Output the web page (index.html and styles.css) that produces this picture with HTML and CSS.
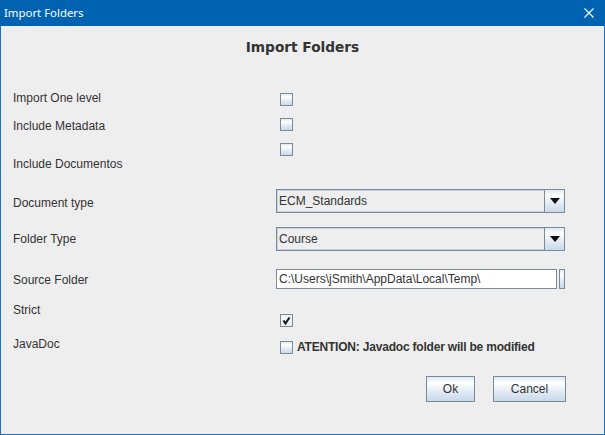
FILE: index.html
```html
<!DOCTYPE html>
<html>
<head>
<meta charset="utf-8">
<link rel="stylesheet" href="styles.css">
</head>
<body>
<div class="window">
  <div class="titlebar">
    <span class="title">Import Folders</span>
    <svg class="close" width="10" height="10" viewBox="0 0 10 10"><path d="M0.5 0.5L9.5 9.5M9.5 0.5L0.5 9.5" stroke="#ffffff" stroke-width="1.1" fill="none"/></svg>
  </div>
  <div class="body">
    <div class="heading">Import Folders</div>
    <div class="form">
      <div class="row r1"><span class="lbl">Import One level</span><div class="ctl"><span class="check"></span></div></div>
      <div class="row r2"><span class="lbl">Include Metadata</span><div class="ctl"><span class="check"></span></div></div>
      <div class="row r3"><span class="lbl">Include Documentos</span><div class="ctl"><span class="check"></span></div></div>
      <div class="row r4"><span class="lbl">Document type</span>
        <div class="ctl"><div class="combo"><span class="combo-value">ECM_Standards</span><span class="combo-btn"><svg width="10" height="6" viewBox="0 0 10 6"><path d="M0 0H10L5 6Z" fill="#111"/></svg></span></div></div>
      </div>
      <div class="row r5"><span class="lbl">Folder Type</span>
        <div class="ctl"><div class="combo"><span class="combo-value">Course</span><span class="combo-btn"><svg width="10" height="6" viewBox="0 0 10 6"><path d="M0 0H10L5 6Z" fill="#111"/></svg></span></div></div>
      </div>
      <div class="row r6"><span class="lbl">Source Folder</span>
        <div class="ctl"><div class="field"><span class="field-input">C:\Users\jSmith\AppData\Local\Temp\</span><span class="field-btn"></span></div></div>
      </div>
      <div class="row r7"><span class="lbl">Strict</span>
        <div class="ctl"><span class="check checked"><svg width="11" height="11" viewBox="0 0 11 11"><path d="M2.5 5.5L4.5 8.5L8.5 2.5" stroke="#111" stroke-width="2" fill="none"/></svg></span></div>
      </div>
      <div class="row r8"><span class="lbl">JavaDoc</span>
        <div class="ctl"><div class="notice"><span class="check"></span><span class="notice-text">ATENTION: Javadoc folder will be modified</span></div></div>
      </div>
    </div>
    <div class="actions">
      <button class="btn btn-ok">Ok</button>
      <button class="btn btn-cancel">Cancel</button>
    </div>
  </div>
</div>
</body>
</html>
```

FILE: styles.css
```css
html, body {
  margin: 0;
  padding: 0;
  background: #eeeeee;
}

.window {
  width: 605px;
  height: 435px;
  display: flex;
  flex-direction: column;
}

.titlebar {
  height: 26px;
  flex: none;
  background: #0063b1;
  color: #ffffff;
  display: flex;
  align-items: center;
  justify-content: space-between;
  padding: 0 11px 0 4px;
  box-sizing: border-box;
}

.title {
  font-family: "Noto Sans", "Open Sans", sans-serif;
  font-size: 11.4px;
  line-height: 14px;
}

.close {
  display: block;
}

.body {
  flex: 1;
  border: 1px solid #1a73c4;
  border-top: 0;
  background: #eeeeee;
  color: #333333;
  font-family: "Liberation Sans", Arial, sans-serif;
  font-size: 12px;
  line-height: 14px;
}

.heading {
  margin-top: 13px;
  text-align: center;
  font-family: "DejaVu Sans", sans-serif;
  font-weight: bold;
  font-size: 13.7px;
  line-height: 16px;
  color: #333333;
}

.form {
  margin-top: 33px;
  padding-left: 12px;
}

.row {
  display: grid;
  grid-template-columns: 263px 289px;
  align-items: start;
}

.lbl {
  display: block;
  white-space: nowrap;
}

.r1 { height: 27px; }
.r1 .lbl { margin-top: 3px; }
.r1 .ctl { margin-top: 5px; }

.r2 { height: 25px; }
.r2 .lbl { margin-top: 4px; }
.r2 .ctl { margin-top: 3px; }

.r3 { height: 45px; }
.r3 .lbl { margin-top: 17px; }
.r3 .ctl { margin-top: 3px; }

.r4 { height: 37px; }
.r4 .lbl { margin-top: 11px; }
.r4 .ctl { margin-top: 4px; }

.r5 { height: 40px; }
.r5 .lbl { margin-top: 10px; }
.r5 .ctl { margin-top: 5px; }

.r6 { height: 36px; }
.r6 .lbl { margin-top: 11px; }
.r6 .ctl { margin-top: 7px; }

.r7 { height: 36px; }
.r7 .lbl { margin-top: 5px; }
.r7 .ctl { margin-top: 16px; }

.r8 { height: 31px; }
.r8 .lbl { margin-top: 3px; }
.r8 .ctl { margin-top: 7px; }

.check {
  display: block;
  width: 13px;
  height: 13px;
  box-sizing: border-box;
  margin-left: 4px;
  border: 1px solid #7a8a99;
  background: linear-gradient(#dde8f3 0%, #ffffff 25%, #e6eef6 55%, #c9d9ea 100%);
  flex: none;
}

.check.checked {
  background: linear-gradient(#f4f6f9 0%, #e9edf2 100%);
}

.check svg {
  display: block;
}

.combo {
  display: flex;
  width: 289px;
  height: 24px;
  box-sizing: border-box;
  border: 1px solid #7a8a99;
  background: #eeeeee;
}

.combo-value {
  flex: 1;
  border: 1px solid #c4d3e3;
  border-right: 0;
  padding: 3px 0 0 1px;
  line-height: 14px;
  font-size: 12px;
  color: #333333;
}

.combo-btn {
  width: 19px;
  flex: none;
  border-left: 1px solid #7a8a99;
  background: linear-gradient(#dde8f3 0%, #ffffff 25%, #e6eef6 55%, #c9d9ea 100%);
  display: flex;
  align-items: center;
  justify-content: center;
}

.combo-btn svg {
  display: block;
}

.field {
  display: flex;
  gap: 2px;
}

.field-input {
  width: 281px;
  height: 20px;
  box-sizing: border-box;
  border: 1px solid #7a8a99;
  background: #ffffff;
  padding: 2px 0 0 2px;
  line-height: 14px;
  white-space: nowrap;
  overflow: hidden;
  color: #333333;
}

.field-btn {
  width: 6px;
  height: 20px;
  box-sizing: border-box;
  border: 1px solid #7a8a99;
  background: linear-gradient(#dde8f3 0%, #ffffff 25%, #e6eef6 55%, #c9d9ea 100%);
}

.notice {
  display: flex;
  align-items: center;
  gap: 4px;
}

.notice-text {
  font-weight: bold;
  line-height: 13px;
  letter-spacing: -0.2px;
  white-space: nowrap;
}

.actions {
  margin-top: 11px;
  display: flex;
  justify-content: flex-end;
  gap: 18px;
  padding-right: 38px;
}

.btn {
  height: 26px;
  box-sizing: border-box;
  border: 1px solid #7a8a99;
  background: linear-gradient(#dde8f3 0%, #ffffff 25%, #e6eef6 55%, #c9d9ea 100%);
  font-family: "Liberation Sans", Arial, sans-serif;
  font-size: 12px;
  color: #333333;
  padding: 0;
  margin: 0;
}

.btn-ok { width: 49px; }
.btn-cancel { width: 73px; }
```
